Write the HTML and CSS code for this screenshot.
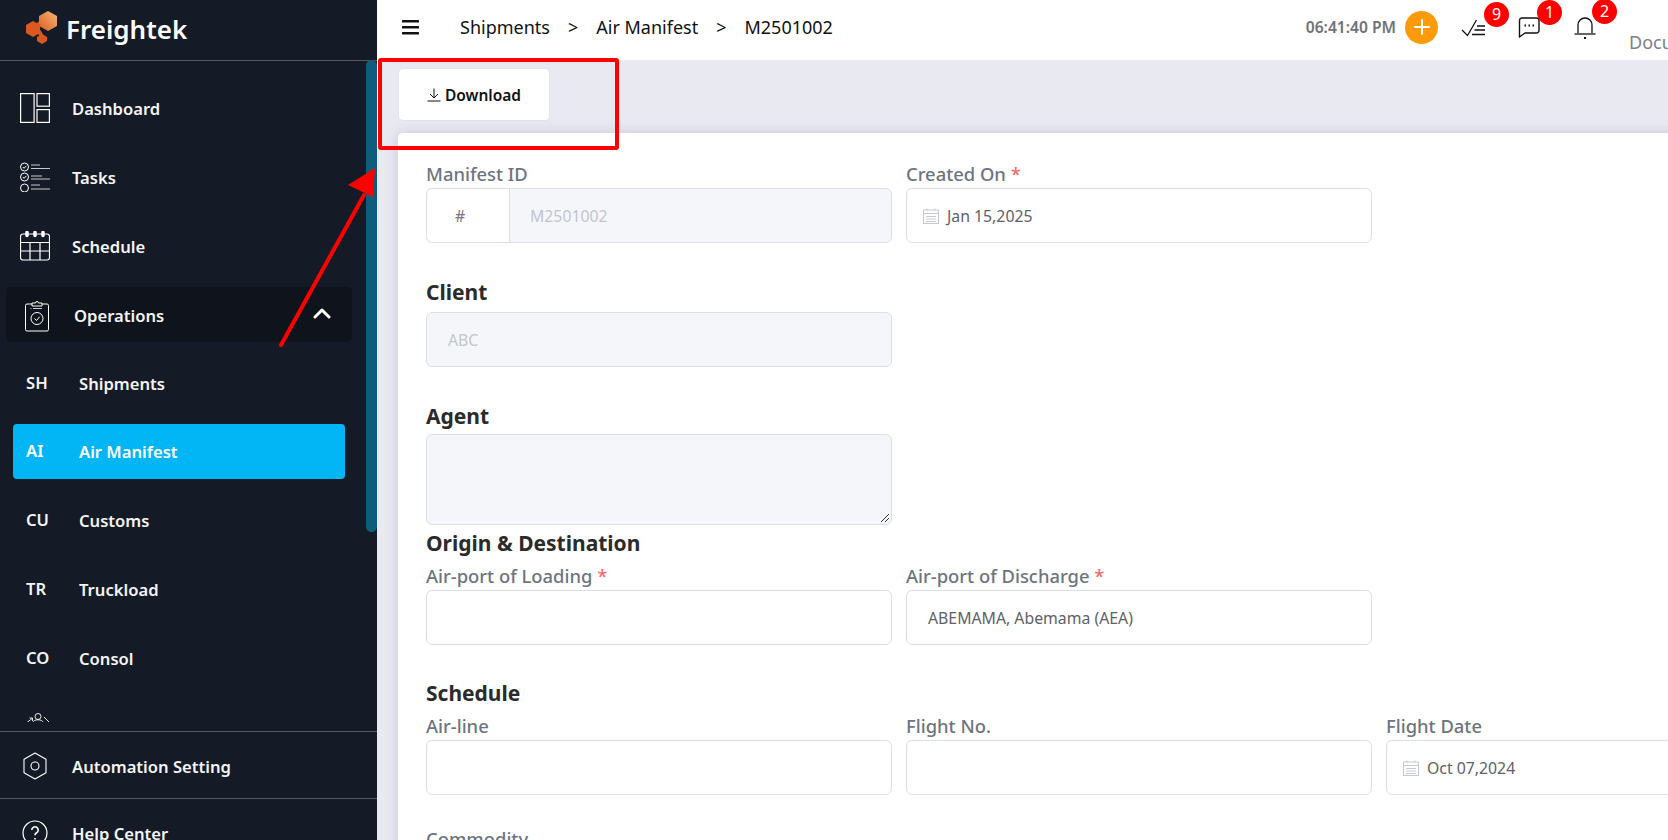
FILE: index.html
```html
<!DOCTYPE html>
<html>

<head>
	<meta charset="utf-8">
	<title>Freightek</title>
	<link rel="stylesheet" href="styles.css">
</head>

<body>
	<div class="app">
		<aside class="sidebar">
			<div class="logo">
				<svg class="logo-mark" width="36" height="34" viewBox="0 0 36 34">
					<defs>
						<linearGradient id="logo-grad" x1="0" y1="1" x2="1" y2="0">
							<stop offset="0" stop-color="#dc5c22"></stop>
							<stop offset="1" stop-color="#f3b877"></stop>
						</linearGradient>
					</defs>
					<path d="M9 18l9-6M14 20l5 8" stroke="#d9591f" stroke-width="4"></path>
					<polygon points="24,1 33,6 33,16 24,21 15,16 15,6" fill="url(#logo-grad)"></polygon>
					<polygon points="9,11 16,15 16,23 9,27 2,23 2,15" fill="#d9591f"></polygon>
					<polygon points="18,24 23,27 23,31 18,34 13,31 13,27" fill="#d9591f"></polygon>
				</svg>
				<span class="logo-text">Freightek</span>
			</div>
			<nav class="nav">
				<a class="nav-item">
					<svg class="nav-icon" viewBox="0 0 30 30" fill="none" stroke="#fff" stroke-width="1.2">
						<rect x="0.6" y="0.6" width="13.5" height="28.8"></rect>
						<rect x="17" y="0.6" width="12.4" height="12.6"></rect>
						<rect x="17" y="16.6" width="12.4" height="12.8"></rect>
					</svg>
					<span>Dashboard</span>
				</a>
				<a class="nav-item">
					<svg class="nav-icon" viewBox="0 0 30 30" fill="none" stroke="#fff" stroke-width="1">
						<circle cx="4.5" cy="5" r="4"></circle>
						<circle cx="4.5" cy="15" r="4"></circle>
						<circle cx="4.5" cy="26" r="4"></circle>
						<path d="M2.8 5l1.3 1.3 2.2-2.4M2.8 15l1.3 1.3 2.2-2.4"></path>
						<path d="M11 3h9M11 6.500h19M11 14h11M11 17h19M11 23h9M11 27h19" stroke="#c9c9c9"></path>
					</svg>
					<span>Tasks</span>
				</a>
				<a class="nav-item">
					<svg class="nav-icon" viewBox="0 0 30 30" fill="none" stroke="#fff" stroke-width="1.2">
						<path d="M3 3h24a2.500 2.500 0 0 1 2.500 2.500v21a2.500 2.500 0 0 1-2.500 2.500h-24a2.500 2.500 0 0 1-2.500-2.500v-21a2.500 2.500 0 0 1 2.500-2.500z"></path>
						<path d="M0.500 11.500h29M0.500 20h29M10 11.500v17.500M20 11.500v17.500"></path>
						<path d="M7 1.500v3M15 1.500v3M23 1.500v3" stroke-width="3.500" stroke-linecap="round"></path>
					</svg>
					<span>Schedule</span>
				</a>
				<a class="nav-item nav-group">
					<svg class="nav-icon nav-icon-clip" viewBox="0 0 24 33" fill="none" stroke="#fff" stroke-width="1">
						<path d="M7 5h-5a1.500 1.500 0 0 0-1.500 1.500v24a1.500 1.500 0 0 0 1.500 1.500h20a1.500 1.500 0 0 0 1.500-1.500v-24a1.500 1.500 0 0 0-1.500-1.500h-5"></path>
						<path d="M7 7v-3h3.500a1.500 1.500 0 0 1 3 0h3.500v3z"></path>
						<path d="M8 9.500h9M5.500 9.500h1" stroke="#c9c9c9"></path>
						<circle cx="12" cy="19.500" r="6"></circle>
						<path d="M9.500 19.500l2 2 3.200-3.800"></path>
					</svg>
					<span>Operations</span>
					<svg class="chevron" width="18" height="11" viewBox="0 0 18 11" fill="none" stroke="#fff" stroke-width="3" stroke-linecap="round" stroke-linejoin="round">
						<path d="M2 9l7-7 7 7"></path>
					</svg>
				</a>
				<a class="nav-sub"><b>SH</b><span>Shipments</span></a>
				<a class="nav-sub active"><b>AI</b><span>Air Manifest</span></a>
				<a class="nav-sub"><b>CU</b><span>Customs</span></a>
				<a class="nav-sub"><b>TR</b><span>Truckload</span></a>
				<a class="nav-sub"><b>CO</b><span>Consol</span></a>
				<a class="nav-sub">
					<svg class="people" width="24" height="24" viewBox="0 0 24 24" fill="none" stroke="#fff" stroke-width="0.9">
						<circle cx="12" cy="3.500" r="3"></circle>
						<path d="M6.500 10c1-2.500 3-3.200 5.500-3.200s4.500.7 5.500 3.200"></path>
						<path d="M1 9.500l5-4M3.500 5h3v3M18 4l5 5"></path>
					</svg>
				</a>
			</nav>
			<div class="side-foot">
				<svg class="foot-icon" width="24" height="28" viewBox="0 0 24 28" fill="none" stroke="#fff" stroke-width="1.1">
					<path d="M12 1l11 6.300v13.400l-11 6.300-11-6.300v-13.400z" stroke-linejoin="round"></path>
					<circle cx="12" cy="14" r="4"></circle>
				</svg>
				<span>Automation Setting</span>
			</div>
			<div class="side-foot">
				<svg class="foot-icon" width="26" height="26" viewBox="0 0 26 26" fill="none" stroke="#fff" stroke-width="1.2">
					<circle cx="13" cy="13" r="12"></circle>
					<path d="M9.800 10a3.200 3.200 0 1 1 4.800 2.800c-1 .6-1.600 1.200-1.600 2.400M13 18v1.600" stroke-width="1.6"></path>
				</svg>
				<span>Help Center</span>
			</div>
			<div class="side-scroll"></div>
		</aside>

		<main class="main">
			<header class="topbar">
				<svg class="burger" width="17" height="15" viewBox="0 0 17 15" fill="#111">
					<rect y="0" width="17" height="2.600" rx="0.600"></rect>
					<rect y="6" width="17" height="2.600" rx="0.600"></rect>
					<rect y="12" width="17" height="2.600" rx="0.600"></rect>
				</svg>
				<div class="crumbs">
					<span>Shipments</span><i>&gt;</i><span>Air Manifest</span><i>&gt;</i><span>M2501002</span>
				</div>
				<div class="top-right">
					<span class="clock">06:41:40 PM</span>
					<span class="plus">
						<svg width="16" height="16" viewBox="0 0 16 16" stroke="#fff" stroke-width="2" stroke-linecap="round">
							<path d="M8 1v14M1 8h14"></path>
						</svg>
					</span>
					<span class="top-icon top-icon-tasks">
						<svg width="25" height="18" viewBox="0 0 25 18" fill="none" stroke="#111" stroke-width="1.300">
							<path d="M1 11l5.500 5.500 9-15.500"></path>
							<path d="M16 7h8M13.500 11h10.500M11 15.500h13"></path>
						</svg>
						<em class="badge">9</em>
					</span>
					<span class="top-icon top-icon-chat">
						<svg width="22" height="21" viewBox="0 0 22 21" fill="none" stroke="#111" stroke-width="1.400">
							<path d="M3.500 1h15a2.500 2.500 0 0 1 2.500 2.500v10a2.500 2.500 0 0 1-2.500 2.500h-11.500l-5.500 4v-16.500a2.500 2.500 0 0 1 2-2.500z" stroke-linejoin="round"></path>
							<path d="M6.500 8.500h1.500M10.500 8.500h1.500M14.500 8.500h1.500" stroke-width="2"></path>
						</svg>
						<em class="badge">1</em>
					</span>
					<span class="top-icon top-icon-bell">
						<svg width="22" height="24" viewBox="0 0 22 24" fill="none" stroke="#111" stroke-width="1.300">
							<path d="M4 17v-8a7 7 0 0 1 14 0v8"></path>
							<path d="M0.500 18h21"></path>
							<path d="M10 22h2" stroke-width="2"></path>
						</svg>
						<em class="badge">2</em>
					</span>
				</div>
				<span class="docu">Documents</span>
			</header>

			<div class="content">
				<button class="btn-download">
					<svg width="14" height="14" viewBox="0 0 14 14" fill="none" stroke="#111" stroke-width="1">
						<path d="M7 0.500v9M3 6l4 4 4-4M0.500 13h13"></path>
					</svg>
					Download
				</button>

				<div class="card">
					<div class="grid">
						<div class="field">
							<label>Manifest ID</label>
							<div class="control control-group">
								<span class="prefix">#</span>
								<span class="group-value">M2501002</span>
							</div>
						</div>
						<div class="field">
							<label>Created On <s>*</s></label>
							<div class="control control-created">
								<svg class="cal" width="16" height="16" viewBox="0 0 16 16" fill="none" stroke="#c6c9d3" stroke-width="1">
									<rect x="0.500" y="2" width="15" height="13.500"></rect>
									<path d="M0.500 5.500h15M4 0.500v2M12 0.500v2M3 8.500h10M3 11h10M3 13.500h10" ></path>
								</svg>
								Jan 15,2025
							</div>
						</div>
					</div>

					<h3 class="sec sec-client">Client</h3>
					<div class="grid">
						<div class="control control-off">ABC</div>
					</div>

					<h3 class="sec sec-agent">Agent</h3>
					<div class="grid">
						<div class="control control-off control-area">
							<svg class="grip" width="10" height="10" viewBox="0 0 10 10" stroke="#333" stroke-width="1">
								<path d="M1 9l8-8M5 9l4-4"></path>
							</svg>
						</div>
					</div>

					<h3 class="sec sec-origin">Origin &amp; Destination</h3>
					<div class="grid grid-origin">
						<div class="field">
							<label>Air-port of Loading <s>*</s></label>
							<div class="control"></div>
						</div>
						<div class="field">
							<label>Air-port of Discharge <s>*</s></label>
							<div class="control control-pad">ABEMAMA, Abemama (AEA)</div>
						</div>
					</div>

					<h3 class="sec sec-schedule">Schedule</h3>
					<div class="grid grid-schedule">
						<div class="field">
							<label>Air-line</label>
							<div class="control"></div>
						</div>
						<div class="field">
							<label>Flight No.</label>
							<div class="control"></div>
						</div>
						<div class="field">
							<label>Flight Date</label>
							<div class="control">
								<svg class="cal" width="16" height="16" viewBox="0 0 16 16" fill="none" stroke="#c6c9d3" stroke-width="1">
									<rect x="0.500" y="2" width="15" height="13.500"></rect>
									<path d="M0.500 5.500h15M4 0.500v2M12 0.500v2M3 8.500h10M3 11h10M3 13.500h10"></path>
								</svg>
								Oct 07,2024
							</div>
						</div>
					</div>

					<div class="field field-last">
						<label>Commodity</label>
					</div>
				</div>
			</div>
		</main>
	</div>

	<!-- red markup on top of the screenshot -->
	<div class="mark-box"></div>
	<svg class="mark-arrow" width="110" height="190" viewBox="0 0 110 190">
		<path d="M6 182L89 32" stroke="#ff0000" stroke-width="4" stroke-linecap="round"></path>
		<polygon points="100,5 73,22 98,34" fill="#ff0000"></polygon>
	</svg>
</body>

</html>
```

FILE: styles.css
```css
* {
	box-sizing: border-box;
}

html, body {
	margin: 0;
	height: 840px;
	overflow: hidden;
}

body {
	position: relative;
	font-family: "Noto Sans", "Open Sans", sans-serif;
	color: #222;
}

.app {
	display: flex;
	height: 840px;
}

/* sidebar */
.sidebar {
	position: relative;
	flex: 0 0 377px;
	width: 377px;
	height: 840px;
	overflow: hidden;
	background-color: #141b27;
	color: #f4f4f4;
}

.logo {
	display: flex;
	align-items: center;
	height: 61px;
	padding-left: 24px;
	border-bottom: 1px solid #55585f;
}

.logo-mark {
	margin-right: 6px;
	margin-bottom: 6px;
}

.logo-text {
	font-size: 26px;
	font-weight: 600;
	color: #fff;
	margin-bottom: 3px;
}

.nav {
	height: 661px;
	overflow: hidden;
	padding-top: 19px;
}

.nav-item {
	display: flex;
	align-items: center;
	height: 55px;
	margin-bottom: 14px;
	padding: 1px 0 0 20px;
	font-size: 16.600px;
	font-weight: 600;
}

.nav-icon {
	width: 30px;
	height: 30px;
	margin-right: 22px;
	flex: none;
}

.nav-group {
	position: relative;
	margin-left: 6px;
	width: 346px;
	padding-left: 19px;
	border-radius: 5px;
	background-color: #0f131b;
}

.nav-icon-clip {
	width: 24px;
	height: 33px;
	margin-right: 25px;
}

.chevron {
	position: absolute;
	right: 21px;
	top: 21px;
}

.nav-sub {
	display: flex;
	align-items: center;
	height: 55px;
	width: 332px;
	margin: 0 0 14px 13px;
	padding-left: 13px;
	border-radius: 4px;
	font-size: 16.600px;
	font-weight: 600;
}

.nav-group + .nav-sub {
	margin-bottom: 13px;
}

.nav-sub b {
	width: 53px;
	font-weight: 600;
	margin-top: -2px;
}

.nav-sub.active {
	background-color: #02b5f5;
	color: #fff;
}

.people {
	margin-top: -6px;
}

.side-foot {
	display: flex;
	align-items: center;
	height: 67px;
	margin-top: 9px;
	padding: 2px 0 0 22px;
	border-top: 1px solid #55585f;
	font-size: 16.600px;
	font-weight: 600;
}

.side-foot + .side-foot {
	margin-top: 0;
}

.foot-icon {
	flex: none;
	width: 26px;
	margin-right: 24px;
}

.side-scroll {
	position: absolute;
	left: 366px;
	top: 60px;
	width: 11px;
	height: 472px;
	border-radius: 6px;
	background-color: #0f5d7c;
}

/* top bar */
.main {
	flex: 1;
	min-width: 0;
	background-color: #e9e9f2;
}

.topbar {
	position: relative;
	display: flex;
	align-items: center;
	height: 60px;
	padding: 0 0 6px 25px;
	background-color: #fff;
}

.burger {
	flex: none;
	margin-right: 41px;
}

.crumbs {
	display: flex;
	align-items: center;
	font-size: 18px;
	color: #111;
}

.crumbs i {
	font-style: normal;
	margin: 0 18px;
}

.top-right {
	display: flex;
	align-items: center;
	margin-left: auto;
	margin-right: 72px;
}

.clock {
	font-size: 15.600px;
	font-weight: 600;
	color: #6f7278;
	margin-right: 9px;
}

.plus {
	display: flex;
	align-items: center;
	justify-content: center;
	width: 33px;
	height: 33px;
	border-radius: 50%;
	background-color: #ff9a0b;
	margin-right: 23px;
}

.top-icon {
	position: relative;
	display: flex;
	margin-top: 1px;
}

.top-icon-tasks {
	margin-right: 32px;
}

.top-icon-chat {
	margin-right: 34px;
}

.badge {
	position: absolute;
	left: 21px;
	top: -17px;
	width: 25px;
	height: 25px;
	border-radius: 50%;
	background-color: #ff0000;
	color: #fff;
	font-size: 16px;
	font-style: normal;
	line-height: 25px;
	text-align: center;
}

.top-icon-tasks .badge {
	left: 23px;
}

.top-icon-chat .badge {
	left: 19px;
}

.top-icon-bell .badge {
	left: 18px;
}

.docu {
	position: absolute;
	left: 1252px;
	top: 30px;
	font-size: 18px;
	color: #7b808a;
	white-space: nowrap;
}

/* content */
.content {
	padding: 8px 0 0 21px;
	width: 1400px;
}

.btn-download {
	display: flex;
	align-items: center;
	justify-content: center;
	gap: 4px;
	width: 152px;
	height: 53px;
	padding: 0;
	border: 1px solid #e2e3ea;
	border-radius: 5px;
	background-color: #fff;
	font-family: inherit;
	font-size: 15.500px;
	font-weight: 600;
	color: #111;
}

.card {
	margin-top: 12px;
	padding: 30px 0 0 28px;
	height: 800px;
	border-radius: 5px 0 0 0;
	background-color: #fff;
	box-shadow: 0 0 14px rgba(80, 80, 120, 0.2);
}

.grid {
	display: grid;
	grid-template-columns: repeat(3, 466px);
	column-gap: 14px;
}

.field label {
	display: block;
	height: 22px;
	margin-bottom: 3px;
	font-size: 18.400px;
	font-weight: 500;
	line-height: 22px;
	color: #6c757f;
}

.field s {
	text-decoration: none;
	color: #f46a6a;
}

.control {
	display: flex;
	align-items: center;
	position: relative;
	height: 55px;
	padding-left: 16px;
	border: 1px solid #dcdee8;
	border-radius: 6px;
	background-color: #fff;
	font-size: 15.800px;
	color: #5e6168;
}

.control-created {
	margin-top: 2px;
}

.control-pad {
	padding-left: 21px;
}

.cal {
	margin-right: 8px;
	flex: none;
}

.control-group {
	padding-left: 0;
	background-color: #f5f6fa;
}

.prefix {
	display: flex;
	align-items: center;
	width: 83px;
	height: 100%;
	padding-left: 28px;
	border-right: 1px solid #dcdee8;
	border-radius: 6px 0 0 6px;
	background-color: #fff;
	color: #777;
}

.group-value {
	padding-left: 20px;
	color: #c2c5cb;
}

.control-off {
	padding-left: 21px;
	background-color: #f5f6fa;
	color: #c2c5cb;
}

.control-area {
	height: 91px;
}

.grip {
	position: absolute;
	right: 1px;
	bottom: 1px;
}

.sec {
	margin: 0;
	height: 28px;
	font-size: 21px;
	font-weight: 700;
	line-height: 28px;
	color: #2b2b2b;
}

.sec-client {
	margin-top: 35px;
	margin-bottom: 6px;
}

.sec-agent {
	margin-top: 35px;
	margin-bottom: 4px;
}

.sec-origin {
	margin-top: 4px;
}

.grid-origin {
	margin-top: 8px;
}

.sec-schedule {
	margin-top: 34px;
}

.grid-schedule {
	margin-top: 8px;
}

.field-last {
	margin-top: 33px;
}

/* red markup */
.mark-box {
	position: absolute;
	left: 378px;
	top: 58px;
	width: 241px;
	height: 92px;
	border: 4px solid #ff0000;
	border-radius: 3px;
}

.mark-arrow {
	position: absolute;
	left: 275px;
	top: 163px;
}
```
